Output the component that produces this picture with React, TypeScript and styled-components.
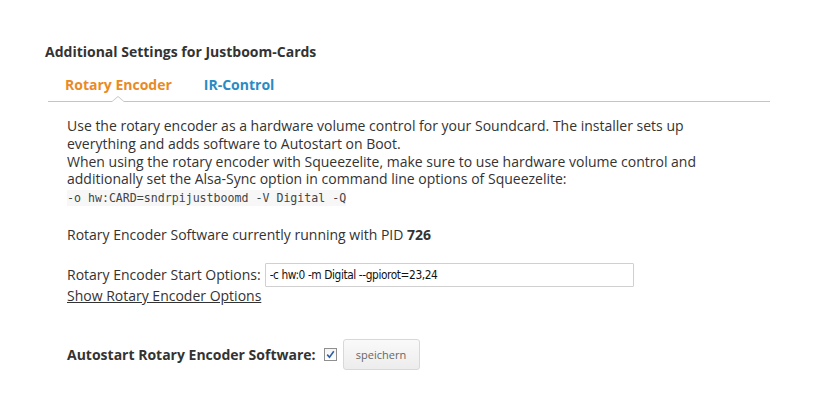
import React from "react";
import styled, { createGlobalStyle } from "styled-components";

const Global = createGlobalStyle`
  html, body { margin: 0; padding: 0; background: #ffffff; }
  body { font-family: "Open Sans", "DejaVu Sans", sans-serif; color: #333333; }
`;

const Page = styled.div`
  width: 818px;
  height: 420px;
  box-sizing: border-box;
  padding: 42px 48px 0 45px;
`;

const Heading = styled.h3`
  margin: 0;
  font-size: 14px;
  font-weight: 700;
  line-height: 20px;
  color: #333;
`;

const TabBar = styled.div`
  margin: 12px 0 0 3px;
  display: flex;
  gap: 32px;
  padding-left: 17px;
  border-bottom: 1px solid #c4c4c4;
`;

const Tab = styled.a<{ $active?: boolean }>`
  position: relative;
  display: block;
  padding: 2px 0 7px;
  font-size: 14px;
  font-weight: 700;
  line-height: 18px;
  text-decoration: none;
  color: ${(p) => (p.$active ? "#e98a26" : "#2a8bc4")};
  ${(p) =>
    p.$active &&
    `
    &::before {
      content: "";
      position: absolute;
      left: 50%;
      bottom: -1px;
      margin-left: -7px;
      width: 0; height: 0;
      border-left: 7px solid transparent;
      border-right: 7px solid transparent;
      border-bottom: 6px solid #c4c4c4;
    }
    &::after {
      content: "";
      position: absolute;
      left: 50%;
      bottom: -1px;
      margin-left: -6px;
      width: 0; height: 0;
      border-left: 6px solid transparent;
      border-right: 6px solid transparent;
      border-bottom: 5px solid #ffffff;
    }
  `}
`;

const Panel = styled.div`
  padding: 15px 0 0 22px;
  font-size: 14px;
  line-height: 17.8px;
  color: #333;
`;

const Para = styled.p`
  margin: 0;
`;

const Code = styled.code`
  display: inline-block;
  margin-top: 1px;
  font-family: "DejaVu Sans Mono", "Liberation Mono", monospace;
  font-size: 11.6px;
  line-height: 16px;
  color: #444;
  background: #f7f7f7;
`;

const StatusLine = styled.p`
  margin: 20px 0 0;
  b { font-weight: 700; }
`;

const OptionRow = styled.div`
  margin-top: 19px;
  display: flex;
  align-items: center;
  gap: 4px;
`;

const TextInput = styled.input`
  box-sizing: border-box;
  width: 369px;
  height: 24px;
  padding: 0 4px;
  border: 1px solid #d0d0d0;
  border-radius: 1px;
  font-family: "DejaVu Sans Condensed", "DejaVu Sans", sans-serif;
  font-size: 11.8px;
  letter-spacing: -0.4px;
  color: #111;
  background: #fff;
  outline: none;
`;

const OptionsLink = styled.a`
  display: block;
  color: #333;
  text-decoration: underline;
  line-height: 18px;
`;

const AutostartRow = styled.div`
  margin-top: 34px;
  display: flex;
  align-items: center;
`;

const AutostartLabel = styled.label`
  font-weight: 700;
  font-size: 14px;
`;

const CheckBox = styled.span`
  box-sizing: border-box;
  display: inline-flex;
  align-items: center;
  justify-content: center;
  width: 13px;
  height: 13px;
  margin: 0 6px 0 8px;
  border: 1px solid #8e8f8f;
  background: linear-gradient(#f4f4f4, #ffffff);
`;

const SaveButton = styled.button`
  box-sizing: border-box;
  width: 77px;
  height: 31px;
  border: 1px solid #d8d8d8;
  border-radius: 3px;
  background: linear-gradient(#fafafa, #ececec);
  font-family: "Open Sans", sans-serif;
  font-size: 11px;
  color: #666;
`;

export default function App() {
  return (
    <>
      <Global />
      <Page>
        <Heading>Additional Settings for Justboom-Cards</Heading>
        <TabBar>
          <Tab $active>Rotary Encoder</Tab>
          <Tab>IR-Control</Tab>
        </TabBar>
        <Panel>
          <Para>
            Use the rotary encoder as a hardware volume control for your Soundcard. The installer sets up
            <br />
            everything and adds software to Autostart on Boot.
            <br />
            When using the rotary encoder with Squeezelite, make sure to use hardware volume control and
            <br />
            additionally set the Alsa-Sync option in command line options of Squeezelite:
            <br />
            <Code>-o hw:CARD=sndrpijustboomd -V Digital -Q</Code>
          </Para>
          <StatusLine>
            Rotary Encoder Software currently running with PID <b>726</b>
          </StatusLine>
          <OptionRow>
            <span>Rotary Encoder Start Options:</span>
            <TextInput defaultValue="-c hw:0 -m Digital --gpiorot=23,24" />
          </OptionRow>
          <OptionsLink href="#">Show Rotary Encoder Options</OptionsLink>
          <AutostartRow>
            <AutostartLabel>Autostart Rotary Encoder Software:</AutostartLabel>
            <CheckBox role="checkbox" aria-checked="true">
              <svg width="9" height="9" viewBox="0 0 9 9">
                <path d="M1.2 4.6 L3.5 7.2 L7.8 1.2" fill="none" stroke="#2f5fa8" strokeWidth="1.6" />
              </svg>
            </CheckBox>
            <SaveButton>speichern</SaveButton>
          </AutostartRow>
        </Panel>
      </Page>
    </>
  );
}
